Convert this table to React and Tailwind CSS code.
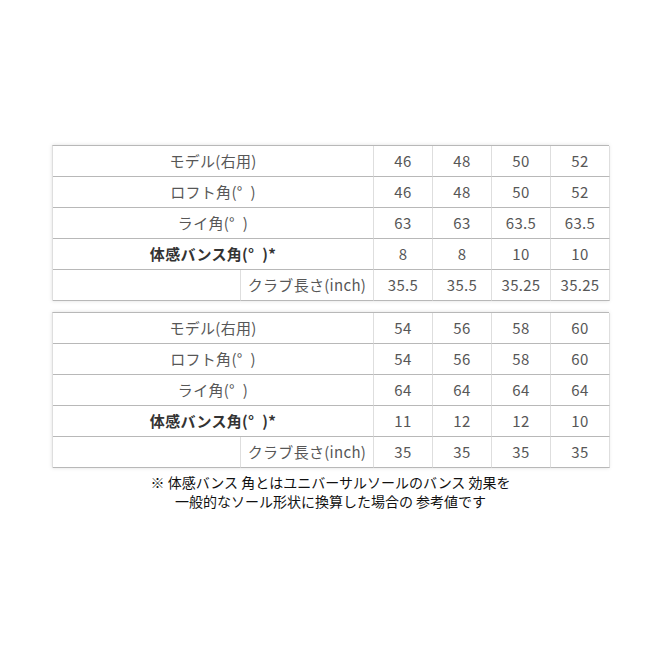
import React from 'react';

const tables = [
  {
    rows: [
      ['46', '48', '50', '52'],
      ['46', '48', '50', '52'],
      ['63', '63', '63.5', '63.5'],
      ['8', '8', '10', '10'],
      ['35.5', '35.5', '35.25', '35.25'],
    ],
  },
  {
    rows: [
      ['54', '56', '58', '60'],
      ['54', '56', '58', '60'],
      ['64', '64', '64', '64'],
      ['11', '12', '12', '10'],
      ['35', '35', '35', '35'],
    ],
  },
];

const labels = [
  'モデル(右用)',
  'ロフト角(°\u2002)',
  'ライ角(°\u2002)',
  '体感バンス角(°\u2002)*',
];

const cell = 'flex h-[31px] items-center justify-center border-b border-r border-b-[#b8b8b8] border-r-[#dedede]';

const SpecTable = ({ rows }) => (
  <div className="w-[557px] shadow-[0_0_4px_rgba(0,0,0,0.13)]">
    <div className="grid grid-cols-[188px_133px_59px_59px_59px_59px] border-l border-t border-l-[#dedede] border-t-[#b8b8b8] text-[15px] tracking-[0.02em] text-[#575757]">
      {rows.map((vals, i) => (
        <React.Fragment key={i}>
          {i < 4 ? (
            <div
              className={`${cell} col-span-2 ${i === 3 ? 'font-bold text-[#333]' : ''}`}
            >
              {labels[i]}
            </div>
          ) : (
            <>
              <div className={cell}></div>
              <div className={cell}>クラブ長さ(inch)</div>
            </>
          )}
          {vals.map((v, j) => (
            <div key={j} className={cell}>
              {v}
            </div>
          ))}
        </React.Fragment>
      ))}
    </div>
  </div>
);

export default function App() {
  return (
    <div
      className="h-[650px] w-[650px] bg-white pl-[52px] pt-[145px]"
      style={{ fontFamily: '"Noto Sans CJK JP", "Noto Sans", sans-serif' }}
    >
      <div className="flex flex-col gap-[11px]">
        {tables.map((t, i) => (
          <SpecTable key={i} rows={t.rows} />
        ))}
      </div>
      <div className="mt-[5px] w-[557px] text-center text-[14px] leading-[19px] text-[#111]">
        <p>※ 体感バンス 角とはユニバーサルソールのバンス 効果を</p>
        <p>一般的なソール形状に換算した場合の 参考値です</p>
      </div>
    </div>
  );
}
